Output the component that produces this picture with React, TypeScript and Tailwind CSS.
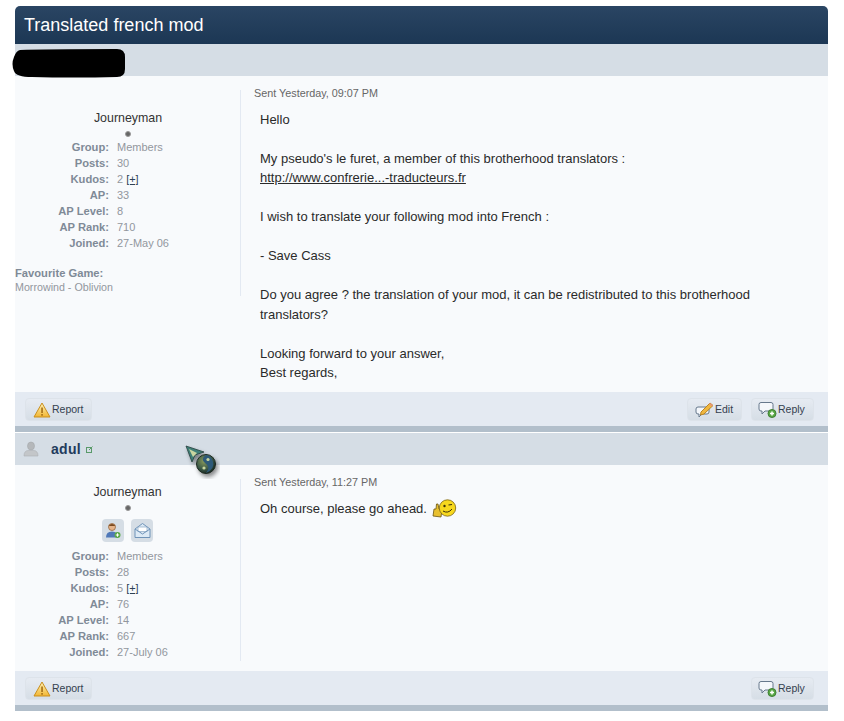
const font = { fontFamily: '"Liberation Sans", Arial, sans-serif' };

interface Stat {
    label: string;
    value: string;
    kudos?: boolean;
}

const firstStats: Stat[] = [
    { label: "Group:", value: "Members" },
    { label: "Posts:", value: "30" },
    { label: "Kudos:", value: "2", kudos: true },
    { label: "AP:", value: "33" },
    { label: "AP Level:", value: "8" },
    { label: "AP Rank:", value: "710" },
    { label: "Joined:", value: "27-May 06" },
];

const secondStats: Stat[] = [
    { label: "Group:", value: "Members" },
    { label: "Posts:", value: "28" },
    { label: "Kudos:", value: "5", kudos: true },
    { label: "AP:", value: "76" },
    { label: "AP Level:", value: "14" },
    { label: "AP Rank:", value: "667" },
    { label: "Joined:", value: "27-July 06" },
];

function WarningIcon() {
    return (
        <svg width="18" height="16" viewBox="0 0 18 16" className="shrink-0">
            <defs>
                <linearGradient id="warn" x1="0" y1="0" x2="0" y2="1">
                    <stop offset="0" stopColor="#fff3b8" />
                    <stop offset="1" stopColor="#f2b632" />
                </linearGradient>
            </defs>
            <path d="M9 1 L17 15 L1 15 Z" fill="url(#warn)" stroke="#c98f1e" strokeLinejoin="round" />
            <rect x="8.200" y="5.500" width="1.700" height="5.500" fill="#a9741a" />
            <rect x="8.200" y="12" width="1.700" height="1.700" fill="#a9741a" />
        </svg>
    );
}

function ReplyIcon() {
    return (
        <svg width="20" height="18" viewBox="0 0 20 18" className="shrink-0">
            <path d="M3 1.500 H13 Q15 1.500 15 3.500 V8 Q15 10 13 10 H7 L4 13 V10 H3 Q1 10 1 8 V3.500 Q1 1.500 3 1.500 Z" fill="#f4f7fb" stroke="#66788c" />
            <circle cx="14" cy="12.500" r="4" fill="#58a845" stroke="#3f7f35" />
            <path d="M14 10.500 V14.500 M12 12.500 H16" stroke="#ffffff" strokeWidth="1.500" />
        </svg>
    );
}

function EditIcon() {
    return (
        <svg width="20" height="18" viewBox="0 0 20 18" className="shrink-0">
            <path d="M3 6 H12 Q14 6 14 8 V11 Q14 13 12 13 H7 L4 16 V13 H3 Q1 13 1 11 V8 Q1 6 3 6 Z" fill="#f4f7fb" stroke="#66788c" />
            <path d="M6 11 L15 2 L18 4.500 L9 13 L5.500 14 Z" fill="#f0b840" stroke="#b98524" />
            <path d="M15 2 L18 4.500 L16.800 5.600 L13.900 3.100 Z" fill="#e8957a" />
        </svg>
    );
}

function ActionButton({ icon, label, className }: { icon: React.ReactNode; label: string; className: string }) {
    return (
        <div className={`flex items-center h-[23px] rounded border border-[#dde3ea] bg-gradient-to-b from-[#e6ebf2] to-[#d6dee6] text-[10.500px] text-[#34414f] ${className}`}>
            {icon}
            <span>{label}</span>
        </div>
    );
}

function PostFooter({ edit }: { edit?: boolean }) {
    return (
        <div className="flex items-center justify-between h-[34px] bg-[#e4eaf2] pl-[10px] pr-[14px] pt-[1px]">
            <ActionButton icon={<WarningIcon />} label="Report" className="w-[67px] pl-[7px] gap-[1px]" />
            <div className="flex gap-[9px]">
                {edit && <ActionButton icon={<EditIcon />} label="Edit" className="w-[55px] pl-[7px]" />}
                <ActionButton icon={<ReplyIcon />} label="Reply" className="w-[63px] pl-[6px]" />
            </div>
        </div>
    );
}

function Stats({ stats }: { stats: Stat[] }) {
    return (
        <div className="flex flex-col">
            {stats.map((s) => (
                <div key={s.label} className="flex h-[16px] items-center text-[11px] leading-[16px]">
                    <span className="w-[94px] text-right text-[11.200px] font-bold text-[#7f8a97]">{s.label}</span>
                    <span className="ml-[8px] text-[#92979e]">
                        {s.value}
                        {s.kudos && <span className="ml-[3px] text-[#2d4056] underline">[+]</span>}
                    </span>
                </div>
            ))}
        </div>
    );
}

function StatusDot() {
    return <div className="mx-auto w-[6px] h-[6px] rounded-full bg-[#666] border border-[#999]" />;
}

function UserIconBox({ children }: { children: React.ReactNode }) {
    return <div className="flex items-center justify-center w-[22px] h-[23px] rounded bg-[#d5dde5]">{children}</div>;
}

export default function App() {
    return (
        <div className="relative min-h-[721px] bg-white pt-[6px] pl-[15px] pr-[16px] overflow-hidden" style={font}>
            <div className="flex items-center h-[38px] rounded-t-[5px] bg-gradient-to-b from-[#2a4563] to-[#1c3754] pl-[9px] text-[18px] text-white">
                Translated french mod
            </div>

            {/* first post */}
            <div className="h-[32px] bg-[#d5dde5]" />
            <div className="flex h-[316px] bg-[#f8fafc]">
                <div className="w-[226px] h-[206px] mt-[14px] border-r border-[#e3e9f2] shrink-0">
                    <div className="w-[226px] pt-[20px] text-center">
                        <div className="text-[12.400px] leading-[16px] text-[#333]">Journeyman</div>
                    </div>
                    <div className="mt-[5px] mb-[2px] w-[226px]"><StatusDot /></div>
                    <Stats stats={firstStats} />
                    <div className="mt-[15px] text-[11.200px] font-bold leading-[14px] text-[#7f8a97] whitespace-nowrap">Favourite Game:</div>
                    <div className="text-[10.700px] leading-[15px] text-[#92979e] whitespace-nowrap">Morrowind - Oblivion</div>
                </div>
                <div className="pl-[13px] pt-[11px]">
                    <div className="text-[10.800px] leading-[12px] text-[#666]">Sent Yesterday, 09:07 PM</div>
                    <div className="ml-[6px] mt-[10.500px] w-[520px] text-[13px] leading-[19.500px] text-[#2a2a2a]">
                        <p>Hello</p>
                        <p className="mt-[19.500px]">My pseudo's le furet, a member of this brotherhood translators :</p>
                        <p className="underline">http://www.confrerie...-traducteurs.fr</p>
                        <p className="mt-[19.500px]">I wish to translate your following mod into French :</p>
                        <p className="mt-[19.500px]">- Save Cass</p>
                        <p className="mt-[19.500px]">Do you agree ? the translation of your mod, it can be redistributed to this brotherhood translators?</p>
                        <p className="mt-[19.500px]">Looking forward to your answer,</p>
                        <p>Best regards,</p>
                    </div>
                </div>
            </div>
            <PostFooter edit />
            <div className="h-[7px] bg-[#b2bfcb] border-b border-white" />

            {/* second post */}
            <div className="flex items-center h-[32px] bg-[#d5dde5] pl-[8px]">
                <svg width="16" height="16" viewBox="0 0 16 16">
                    <path d="M4.500 5 Q4.500 1 8 1 Q11.500 1 11.500 5 Q11.500 9 8 9 Q4.500 9 4.500 5 Z" fill="#b5b8bb" stroke="#a5a8ab" strokeWidth="0.600" />
                    <path d="M1 15 Q1 9.500 5.500 9.500 H10.500 Q15 9.500 15 15 Z" fill="#c3c6c9" stroke="#adb0b3" strokeWidth="0.600" />
                </svg>
                <span className="ml-[12px] text-[14px] font-bold text-[#1f3b5c] tracking-[0.3px]">adul</span>
                <svg width="7" height="7" viewBox="0 0 7 7" className="ml-[5px]">
                    <rect x="0.500" y="1.500" width="5" height="5" fill="none" stroke="#5a9a6a" />
                    <path d="M3 4 L6.500 0.500" stroke="#5a9a6a" />
                </svg>
            </div>
            <div className="flex h-[206px] bg-[#f8fafc]">
                <div className="w-[226px] h-[182px] mt-[14px] border-r border-[#e3e9f2] shrink-0">
                    <div className="pt-[5px] text-center text-[12.400px] leading-[16px] text-[#333]">Journeyman</div>
                    <div className="mt-[5px]"><StatusDot /></div>
                    <div className="flex justify-center gap-[7px] mt-[8px] mb-[6px]">
                        <UserIconBox>
                            <svg width="16" height="17" viewBox="0 0 16 17">
                                <circle cx="7" cy="5" r="3.500" fill="#e6b48a" stroke="#8a5a30" strokeWidth="0.700" />
                                <path d="M3.500 4 Q7 0 10.500 4 Z" fill="#7a4a20" />
                                <path d="M1 15.500 Q1 9.500 7 9.500 Q13 9.500 13 15.500 Z" fill="#4f78b8" />
                                <circle cx="12.500" cy="13" r="3" fill="#58a845" />
                                <path d="M12.500 11.300 V14.700 M10.800 13 H14.200" stroke="#fff" />
                            </svg>
                        </UserIconBox>
                        <UserIconBox>
                            <svg width="17" height="17" viewBox="0 0 17 17">
                                <path d="M1 7 L8.500 1.500 L16 7 V15.500 H1 Z" fill="#dce9f5" stroke="#6f93b8" />
                                <rect x="4" y="5" width="9" height="4.500" fill="#fff" stroke="#8aa7c4" strokeWidth="0.700" />
                                <path d="M1 7 L8.500 12 L16 7" fill="none" stroke="#6f93b8" />
                            </svg>
                        </UserIconBox>
                    </div>
                    <Stats stats={secondStats} />
                </div>
                <div className="pl-[13px] pt-[11px]">
                    <div className="text-[10.800px] leading-[12px] text-[#666]">Sent Yesterday, 11:27 PM</div>
                    <div className="ml-[6px] mt-[11px] flex items-center text-[13px] leading-[20px] text-[#2a2a2a]">
                        <span>Oh course, please go ahead.</span>
                        <svg width="25" height="20" viewBox="0 0 25 20" className="ml-[5px]">
                            <path d="M1 17 L2 10 L4 10 L4.500 5 L6 5 L7 10 L10 11 L9 18 Z" fill="#e8c030" stroke="#6a5410" strokeWidth="0.800" />
                            <circle cx="15.500" cy="9" r="8.200" fill="#f7d81e" stroke="#7a6210" strokeWidth="0.800" />
                            <circle cx="12.500" cy="7" r="1.200" fill="#3c3208" />
                            <path d="M16.500 6 L20 5.500" stroke="#3c3208" strokeWidth="1.200" />
                            <path d="M11 12 Q16 15 20 10" fill="none" stroke="#3c3208" />
                        </svg>
                    </div>
                </div>
            </div>
            <PostFooter />
            <div className="h-[6px] bg-[#b2bfcb]" />

            {/* redaction scribble over the first username */}
            <svg width="114" height="30" viewBox="0 0 114 30" className="absolute left-[12px] top-[49px]">
                <path d="M8 1 Q30 0 105 0 Q113 0 113 8 V20 Q113 28 105 28 Q60 29 20 28 Q4 28 2 22 Q-1 15 2 8 Q4 2 8 1 Z" fill="#000" />
            </svg>

            {/* mouse cursor */}
            <svg width="36" height="36" viewBox="0 0 36 36" className="absolute left-[184px] top-[443px]">
                <defs>
                    <filter id="cursorShadow" x="-30%" y="-30%" width="170%" height="170%">
                        <feDropShadow dx="2" dy="3" stdDeviation="2" floodColor="#000" floodOpacity="0.450" />
                    </filter>
                    <radialGradient id="orb" cx="0.400" cy="0.350" r="0.700">
                        <stop offset="0" stopColor="#8a9a5a" />
                        <stop offset="0.600" stopColor="#3c5a48" />
                        <stop offset="1" stopColor="#15221c" />
                    </radialGradient>
                </defs>
                <g filter="url(#cursorShadow)">
                    <path d="M2 3 L20 9 L11 12 L8 19 Z" fill="#3f7f78" stroke="#26403c" strokeWidth="0.800" />
                    <path d="M5 6 L13 10 L9 14 Z" fill="#c9d6a0" />
                    <circle cx="22" cy="21" r="9.500" fill="url(#orb)" stroke="#1d2a22" />
                    <path d="M22 12 Q16 16 21 20 Q27 24 22 30 Q31 26 29 19 Q27 12 22 12 Z" fill="#2f5a78" />
                    <circle cx="24" cy="16.500" r="1.600" fill="#c9d6a0" />
                    <circle cx="20" cy="25" r="1.600" fill="#c9d6a0" />
                </g>
            </svg>
        </div>
    );
}
